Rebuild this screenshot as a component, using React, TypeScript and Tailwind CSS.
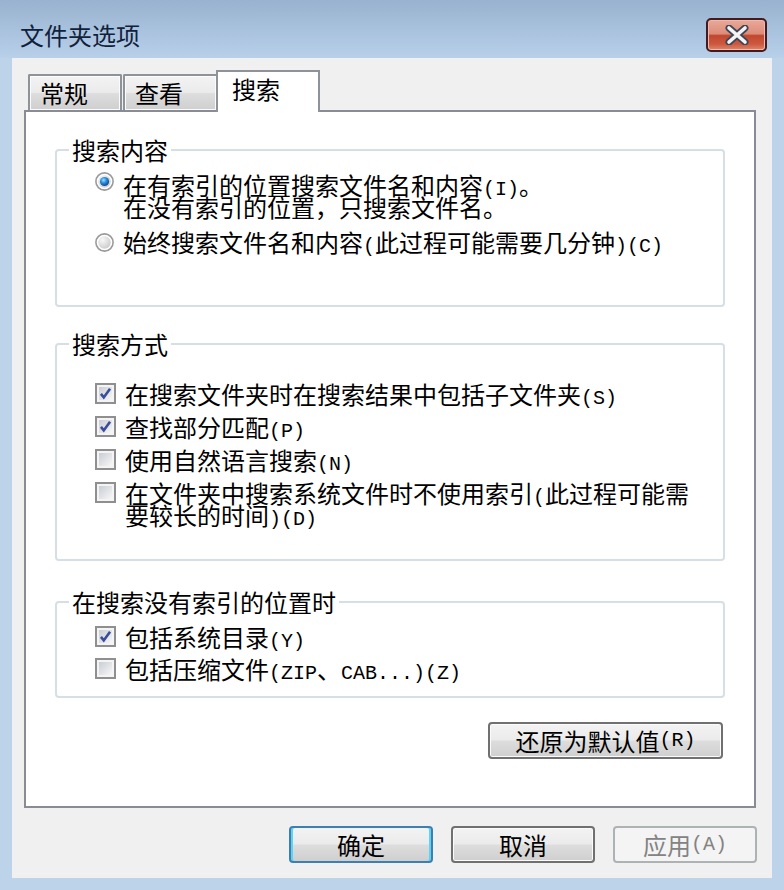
import React from 'react';

const CJK = "font-['Noto_Sans_CJK_SC','Noto_Sans_CJK_TC',sans-serif]";

// SimSun-like mixed text: ASCII runs are half-width, so put them in a mono face
const Mixed = ({ text }: { text: string }) => {
  const parts = text.split(/([\x20-\x7E]+)/).filter(Boolean);
  return (
    <>
      {parts.map((p, i) =>
        /^[\x20-\x7E]+$/.test(p) ? (
          <span key={i} className="font-['Liberation_Mono',monospace] text-[20px] leading-[0]">
            {p}
          </span>
        ) : (
          <span key={i}>{p}</span>
        )
      )}
    </>
  );
};

const Radio = ({ checked, id }: { checked?: boolean; id: string }) => (
  <svg width="19" height="19" viewBox="0 0 19 19" className="shrink-0">
    <defs>
      <radialGradient id={`rg-${id}`} cx="0.35" cy="0.3" r="0.8">
        <stop offset="0" stopColor="#f8f8f8" />
        <stop offset="1" stopColor="#c9c9c9" />
      </radialGradient>
      <radialGradient id={`dot-${id}`} cx="0.4" cy="0.35" r="0.7">
        <stop offset="0" stopColor="#9fe0ff" />
        <stop offset="0.45" stopColor="#2a8ddc" />
        <stop offset="1" stopColor="#0b3f8a" />
      </radialGradient>
    </defs>
    <circle cx="9.5" cy="9.5" r="8.6" fill="#ffffff" stroke="#9a9a9a" strokeWidth="1.6" />
    <circle cx="9.5" cy="9.5" r="6.2" fill={`url(#rg-${id})`} />
    {checked && <circle cx="9.5" cy="9.5" r="4.6" fill={`url(#dot-${id})`} />}
  </svg>
);

const Check = ({ checked }: { checked?: boolean }) => (
  <div className="w-[21px] h-[21px] shrink-0 border-2 border-[#8f8f8f] bg-[#f4f4f4] p-[2px]">
    <div className="w-full h-full bg-gradient-to-br from-[#c9cdd3] to-[#f7f7f7]">
      {checked && (
        <svg width="13" height="13" viewBox="0 0 12 12">
          <path d="M1.8 6.4 L4.4 9.6 L10.2 1.6" fill="none" stroke="#3a4d9c" strokeWidth="2.4" />
        </svg>
      )}
    </div>
  </div>
);

const Group = ({
  title,
  className,
  children,
}: {
  title: string;
  className: string;
  children: React.ReactNode;
}) => (
  <fieldset className={`border-2 border-[#d5dfe5] rounded-[4px] ${className}`}>
    <legend className="ml-[12px] px-[3px] leading-[26px]">{title}</legend>
    {children}
  </fieldset>
);

const btnBase =
  'h-[37px] w-[144px] rounded-[4px] border-2 flex items-center justify-center leading-[24px]';
const btnFace =
  'bg-[linear-gradient(to_bottom,#f3f3f3_0%,#ebebeb_48%,#dddddd_52%,#cfcfcf_100%)] shadow-[inset_0_0_0_1px_#fbfbfb]';

export default function App() {
  return (
    <div
      className={`w-[784px] h-[890px] flex flex-col bg-[#bcd3ea] text-[24px] text-black ${CJK}`}
    >
      {/* Title bar */}
      <div className="h-[58px] flex items-start justify-between bg-gradient-to-b from-[#98b2cf] to-[#b8d0ea]">
        <span className="mt-[21px] ml-[20px] leading-[28px] text-[#10223a]">文件夹选项</span>
        <div className="mt-[18px] mr-[17px] w-[61px] h-[34px] rounded-[5px] border-2 border-[#431a1d] bg-[linear-gradient(to_bottom,#eaa897_0%,#dc8d7a_46%,#c1472f_52%,#cc583f_80%,#de8669_100%)] shadow-[inset_0_0_0_1px_#f0b9ab] flex items-center justify-center">
          <svg width="26" height="20" viewBox="0 0 26 20">
            <path d="M5 3 L21 17 M21 3 L5 17" stroke="#3f4658" strokeWidth="7" strokeLinecap="round" />
            <path d="M5 3 L21 17 M21 3 L5 17" stroke="#f4f4f4" strokeWidth="3.6" strokeLinecap="round" />
          </svg>
        </div>
      </div>

      {/* Client area */}
      <div className="mx-[12px] h-[820px] bg-[#f0f0f0] pt-[12px] px-[12px] flex flex-col">
        {/* Tabs */}
        <div className="relative z-10 h-[42px] ml-[4px] flex items-end">
          <div className={`mb-[2px] h-[36px] w-[94px] border-2 border-b-0 border-[#8e9299] pl-[10px] leading-[34px] ${btnFace} rounded-t-[2px]`}>
            常规
          </div>
          <div className={`ml-[1px] mb-[2px] h-[36px] w-[95px] border-2 border-b-0 border-[#8e9299] pl-[10px] leading-[34px] ${btnFace} rounded-t-[2px]`}>
            查看
          </div>
          <div className="relative -ml-[2px] h-[42px] w-[104px] border-2 border-b-0 border-[#8e9299] bg-white pl-[14px] leading-[34px]">
            搜索
          </div>
        </div>

        {/* Tab panel */}
        <div className="-mt-[2px] w-[732px] h-[698px] border-2 border-[#898c95] bg-white px-[29px] flex flex-col">
          <Group title="搜索内容" className="mt-[25px] h-[170px]">
            <div className="pl-[38px] pt-[11px] flex flex-col">
              <div className="flex items-start gap-[9px]">
                <div className="-mt-[2px]">
                  <Radio checked id="a" />
                </div>
                <div className="leading-[22px]">
                  <Mixed text="在有索引的位置搜索文件名和内容(I)。" />
                  <br />
                  <Mixed text="在没有索引的位置，只搜索文件名。" />
                </div>
              </div>
              <div className="mt-[13px] flex items-start gap-[9px]">
                <div className="mt-[2px]">
                  <Radio id="b" />
                </div>
                <div className="leading-[22px]">
                  <Mixed text="始终搜索文件名和内容(此过程可能需要几分钟)(C)" />
                </div>
              </div>
            </div>
          </Group>

          <Group title="搜索方式" className="mt-[24px] h-[230px]">
            <div className="pl-[38px] pt-[26px] flex flex-col gap-[11px]">
              {[
                { c: true, t: ['在搜索文件夹时在搜索结果中包括子文件夹(S)'] },
                { c: true, t: ['查找部分匹配(P)'] },
                { c: false, t: ['使用自然语言搜索(N)'] },
                { c: false, t: ['在文件夹中搜索系统文件时不使用索引(此过程可能需', '要较长的时间)(D)'] },
              ].map((r, i) => (
                <div key={i} className="flex items-start gap-[9px]">
                  <Check checked={r.c} />
                  <div className="leading-[22px]">
                    {r.t.map((line, j) => (
                      <div key={j}>
                        <Mixed text={line} />
                      </div>
                    ))}
                  </div>
                </div>
              ))}
            </div>
          </Group>

          <Group title="在搜索没有索引的位置时" className="mt-[28px] h-[109px]">
            <div className="pl-[38px] pt-[11px] flex flex-col gap-[10px]">
              <div className="flex items-start gap-[9px]">
                <Check checked />
                <div className="leading-[22px]">
                  <Mixed text="包括系统目录(Y)" />
                </div>
              </div>
              <div className="flex items-start gap-[9px]">
                <Check />
                <div className="leading-[22px]">
                  <Mixed text="包括压缩文件(ZIP、CAB...)(Z)" />
                </div>
              </div>
            </div>
          </Group>

          <div className="mt-[24px] self-end mr-[2px]">
            <div className={`${btnBase} ${btnFace} w-[235px] border-[#707070]`}>
              <Mixed text="还原为默认值(R)" />
            </div>
          </div>
        </div>

        {/* Dialog buttons */}
        <div className="mt-[18px] mr-[3px] flex justify-end gap-[18px]">
          <div className={`${btnBase} bg-[linear-gradient(to_bottom,#eaf6fd_0%,#d9f0fc_48%,#bee6fd_52%,#a7d9f5_100%)] border-[#3c7fb1] shadow-[inset_0_0_0_2px_#5fd3f6]`}>
            <div className="w-full h-full flex items-center justify-center rounded-[2px] bg-[linear-gradient(to_bottom,#f3f3f3_0%,#ebebeb_48%,#dddddd_52%,#cfcfcf_100%)] m-[2px]">
              确定
            </div>
          </div>
          <div className={`${btnBase} ${btnFace} border-[#707070]`}>取消</div>
          <div className={`${btnBase} bg-[#f4f4f4] border-[#adb2b5] text-[#838383]`}>
            <Mixed text="应用(A)" />
          </div>
        </div>
      </div>
    </div>
  );
}
